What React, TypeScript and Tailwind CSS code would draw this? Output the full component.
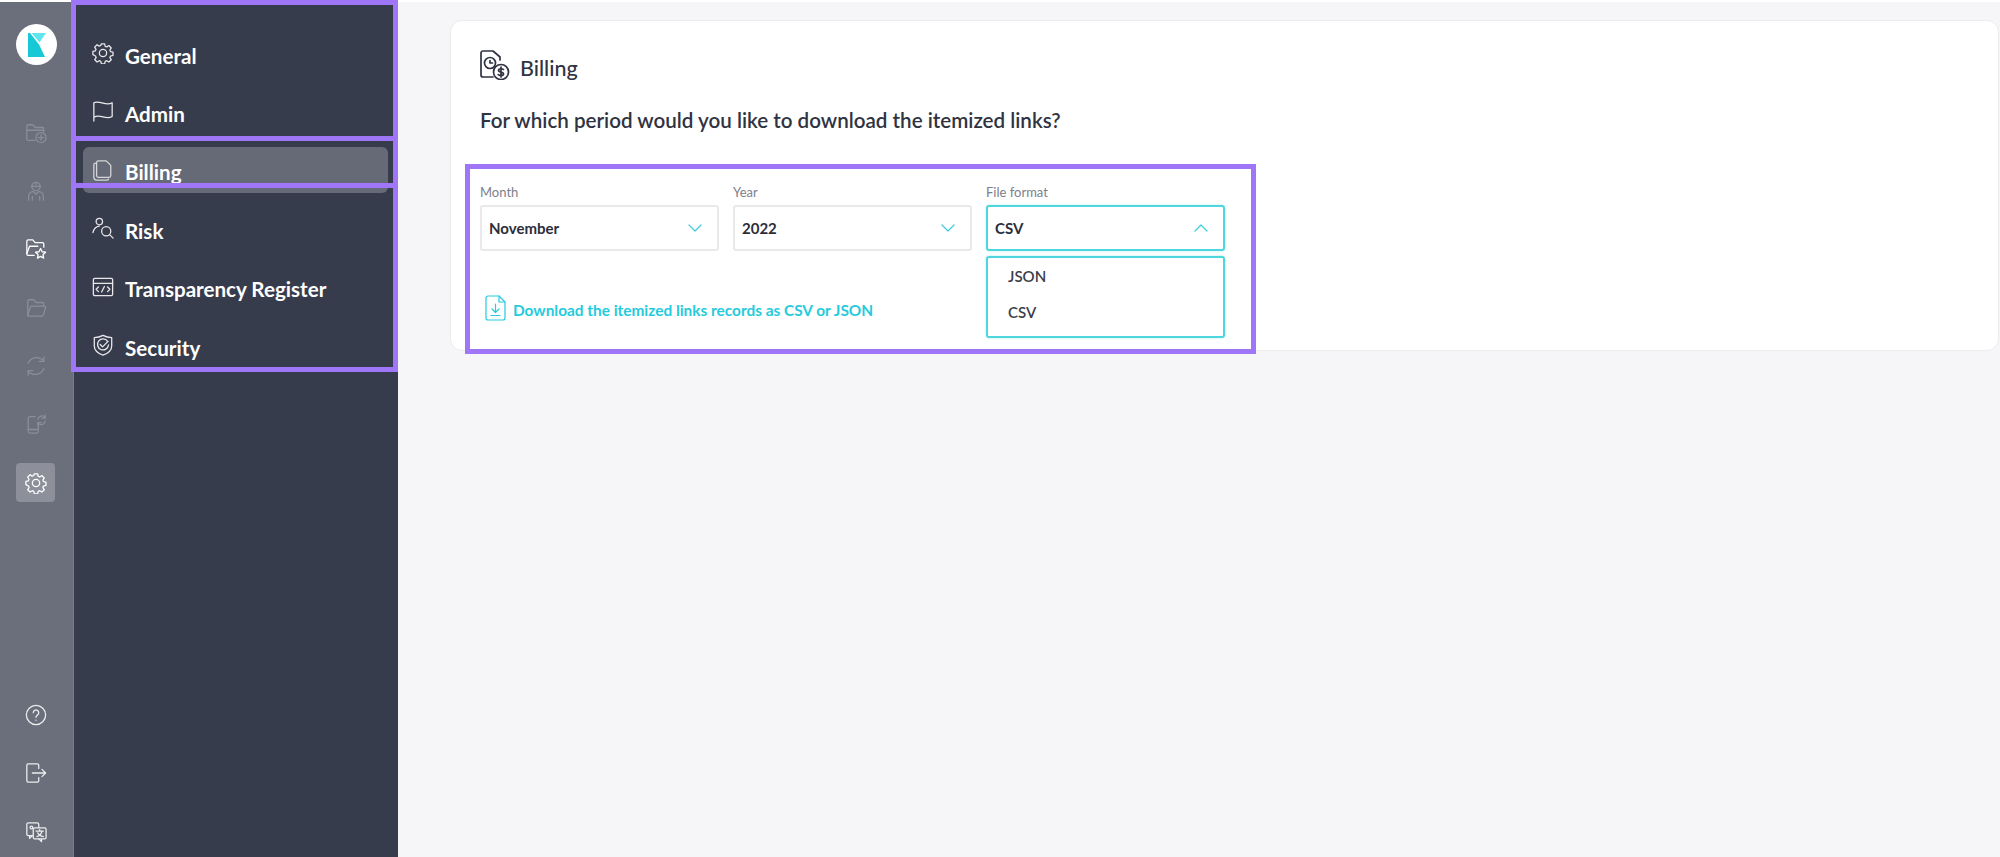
import type { ReactNode } from "react";

const font = "font-['Lato','Liberation_Sans',sans-serif]";

function Ico({ children, size = 22, view = 24, sw = 1.4 }: { children: ReactNode; size?: number; view?: number; sw?: number }) {
  return (
    <svg width={size} height={size} viewBox={`0 0 ${view} ${view}`} fill="none" stroke="currentColor" strokeWidth={sw} strokeLinecap="round" strokeLinejoin="round">
      {children}
    </svg>
  );
}

const gearPath =
  "M10.2 2h3.6l.6 2.7 1.7.7 2.3-1.5 2.6 2.6-1.5 2.3.7 1.7 2.7.6v3.6l-2.7.6-.7 1.7 1.5 2.3-2.6 2.6-2.3-1.5-1.7.7-.6 2.7h-3.6l-.6-2.7-1.7-.7-2.3 1.5-2.6-2.6 1.5-2.3-.7-1.7L1 13.8v-3.6l2.7-.6.7-1.7-1.5-2.3 2.6-2.6 2.3 1.5 1.7-.7z";

const GearIcon = () => (
  <Ico>
    <path d={gearPath} />
    <circle cx="12" cy="12" r="4" />
  </Ico>
);

const railTop = [
  {
    dim: true,
    icon: (
      <Ico>
        <path d="M11 20H3.500A1.500 1.500 0 0 1 2 18.500V4.500A1.500 1.500 0 0 1 3.500 3h5l2.500 3h8A1.500 1.500 0 0 1 20.500 7.500V11" />
        <path d="M2 9h18" />
        <circle cx="17.500" cy="17" r="5.500" />
        <path d="M17.500 14v6M14.500 17h6" />
      </Ico>
    ),
  },
  {
    dim: true,
    icon: (
      <Ico>
        <circle cx="12" cy="7" r="4.500" />
        <path d="M7 7h10M12 2.500V5" />
        <path d="M4 22v-4c0-3 2.500-5 5-5.500l3 3 3-3c2.500.5 5 2.500 5 5.500v4" />
        <path d="M8 22v-4M16 22v-4" />
      </Ico>
    ),
  },
  {
    dim: false,
    icon: (
      <Ico>
        <path d="M10 19H3.500A1.500 1.500 0 0 1 2 17.500V3.500A1.500 1.500 0 0 1 3.500 2h5l2.500 3h8A1.500 1.500 0 0 1 20.500 6.500V10" />
        <path d="M2 17l3-8h9" />
        <path d="M17 11.500l1.700 3.500 3.800.5-2.800 2.600.7 3.800-3.400-1.800-3.400 1.800.7-3.800-2.800-2.600 3.800-.5z" />
      </Ico>
    ),
  },
  {
    dim: true,
    icon: (
      <Ico>
        <path d="M3 19V4.500A1.500 1.500 0 0 1 4.500 3h5l2.500 3h7A1.500 1.500 0 0 1 20.500 7.500V10" />
        <path d="M3 20.500l3-10A1.500 1.500 0 0 1 7.500 10h14a1 1 0 0 1 1 1.300l-2.500 8.500a1.500 1.500 0 0 1-1.500 1H3z" />
      </Ico>
    ),
  },
  {
    dim: true,
    icon: (
      <Ico>
        <path d="M20.500 6.500A10 10 0 0 0 3.500 9" />
        <path d="M3.500 17.500A10 10 0 0 0 20.500 15" />
        <path d="M20.500 2v5h-5M3.500 22v-5h5" />
      </Ico>
    ),
  },
  {
    dim: true,
    icon: (
      <Ico>
        <path d="M11 4H5.500A2 2 0 0 0 3.500 6v14A2 2 0 0 0 5.500 22h7a2 2 0 0 0 2-2v-6" />
        <path d="M3.500 18h11" />
        <path d="M14 7a4.500 4.500 0 0 1 8-2M22 9a4.500 4.500 0 0 1-8 2" />
        <path d="M22 2v3.500h-3.500M14 14v-3.500h3.500" />
      </Ico>
    ),
  },
];

const navItems = [
  { label: "General", icon: <GearIcon /> },
  {
    label: "Admin",
    icon: (
      <Ico>
        <path d="M2 23V3c3-1.500 6.500-.5 10 .5s7 1.500 10-.5v15c-3 2-6.500 1.500-10 .5S5 17 2 19" />
      </Ico>
    ),
  },
  {
    label: "Billing",
    active: true,
    icon: (
      <Ico>
        <path d="M7 2h8.500L20.500 7v11a2 2 0 0 1-2 2H7a2 2 0 0 1-2-2V4a2 2 0 0 1 2-2z" />
        <path d="M5 4.500H4A2 2 0 0 0 2 6.500V20a3 3 0 0 0 3 3h11a2 2 0 0 0 2-1" />
      </Ico>
    ),
  },
  {
    label: "Risk",
    icon: (
      <Ico>
        <circle cx="8" cy="5" r="3.500" />
        <path d="M1 17c1-4 3.500-6.500 7-7" />
        <circle cx="15.500" cy="15.500" r="5" />
        <path d="M19.500 19.500L23 23" />
      </Ico>
    ),
  },
  {
    label: "Transparency Register",
    icon: (
      <Ico>
        <rect x="1.500" y="2.500" width="21" height="19" rx="1.500" />
        <path d="M1.500 8h21" />
        <path d="M7 12l-2.500 2.500L7 17M17 12l2.500 2.500L17 17M13.500 11.500l-3 6" />
      </Ico>
    ),
  },
  {
    label: "Security",
    icon: (
      <Ico>
        <path d="M12 1.500c3 1.500 6 2.300 9.500 2.500v9c0 5-4 8-9.500 10C6.500 21 2.500 18 2.500 13V4C6 3.800 9 3 12 1.500z" />
        <path d="M17 8a6 6 0 1 0 1 4" />
        <path d="M9 11.500l2.500 2.500 6-6" />
      </Ico>
    ),
  },
];

function Chevron({ up }: { up?: boolean }) {
  return (
    <svg width="16" height="10" viewBox="0 0 16 10" fill="none" stroke="#3fcfdc" strokeWidth="1.300" strokeLinecap="round" strokeLinejoin="round">
      <path d={up ? "M2 8l6-6 6 6" : "M2 2l6 6 6-6"} />
    </svg>
  );
}

function Field({ label, value, open }: { label: string; value: string; open?: boolean }) {
  return (
    <div className="w-[239px]">
      <div className="pt-[1px] text-[13px] leading-[18px] text-[#7d808a]">{label}</div>
      <div
        className={
          open
            ? "mt-[4px] flex h-[46px] items-center justify-between rounded-[3px] border-2 border-[#4ed6de] pl-[7px] pr-[14px] shadow-[0_0_3px_#bdeef1]"
            : "mt-[4px] flex h-[46px] items-center justify-between rounded-[3px] border-2 border-[#e9e9eb] pl-[7px] pr-[14px]"
        }
      >
        <span className="text-[15px] font-bold text-[#2b2e3a]">{value}</span>
        <Chevron up={open} />
      </div>
    </div>
  );
}

export default function App() {
  return (
    <div className={`relative flex h-[857px] w-[2000px] flex-col overflow-hidden bg-white pt-[2px] ${font}`}>
      <div className="flex min-h-0 flex-1">
        <aside className="flex w-[74px] shrink-0 flex-col items-center border-r border-[#7a7d89] bg-[#6b6e7b] pb-[6px] pt-[22px]">
          <div className="flex h-[41px] w-[41px] items-center justify-center rounded-full bg-white">
            <svg width="18" height="24" viewBox="0 0 18 24">
              <path d="M0 0h2l9 11.500L17 24H0z" fill="#17c9d6" />
              <path d="M3.500 0H18l-6.500 9.500z" fill="#62e4ec" />
            </svg>
          </div>
          <div className="mt-[48px] flex flex-col items-center gap-[19.4px] pr-[2px]">
            {railTop.map((item, i) => (
              <div key={i} className={item.dim ? "flex h-[39px] w-[39px] items-center justify-center text-[#8b8e9a]" : "flex h-[39px] w-[39px] items-center justify-center text-white"}>
                {item.icon}
              </div>
            ))}
            <div className="flex h-[39px] w-[39px] items-center justify-center rounded-[4px] bg-[#8d909b] text-white">
              <GearIcon />
            </div>
          </div>
          <div className="mt-auto flex flex-col items-center gap-[19.4px] pr-[2px] text-[#eceded]">
            <div className="flex h-[39px] w-[39px] items-center justify-center">
              <Ico>
                <circle cx="12" cy="12" r="10.500" />
                <path d="M9 9.500a3 3 0 1 1 4.500 2.600c-1 .6-1.500 1.200-1.500 2.400" />
                <path d="M12 17.500v.2" />
              </Ico>
            </div>
            <div className="flex h-[39px] w-[39px] items-center justify-center">
              <Ico>
                <path d="M15 7V3.500A1.500 1.500 0 0 0 13.500 2h-10A1.500 1.500 0 0 0 2 3.500v17A1.500 1.500 0 0 0 3.500 22h10a1.500 1.500 0 0 0 1.500-1.500V17" />
                <path d="M8 12h14M18.500 8l4 4-4 4" />
              </Ico>
            </div>
            <div className="flex h-[39px] w-[39px] items-center justify-center">
              <Ico>
                <path d="M8 16H3.500A1.500 1.500 0 0 1 2 14.500v-11A1.500 1.500 0 0 1 3.500 2h10A1.500 1.500 0 0 1 15 3.500V7" />
                <path d="M5 16v3l3-3" />
                <rect x="9" y="7.500" width="14" height="12" rx="1.500" />
                <path d="M18 19.500v3l-3-3" />
                <path d="M12 11h8M16 9.500V11M18.500 11c-.5 3-2.500 5-5.500 6M14 13c1 2 3 3.500 6 4" />
                <circle cx="7" cy="7" r="1.500" />
              </Ico>
            </div>
          </div>
        </aside>

        <nav className="flex w-[324px] shrink-0 flex-col gap-[12.4px] bg-[#373c4d] pl-[9px] pr-[10px] pt-[28px]">
          {navItems.map((item) => (
            <div
              key={item.label}
              className={
                item.active
                  ? "flex h-[46px] items-center gap-[11px] rounded-[6px] bg-[#666a76] pl-[9px] text-white"
                  : "flex h-[46px] items-center gap-[11px] rounded-[6px] pl-[9px] text-white"
              }
            >
              <span className={item.active ? "text-[#d5d6da]" : "text-[#e8e8ea]"}>{item.icon}</span>
              <span className="mt-[6px] text-[20.6px] font-bold">{item.label}</span>
            </div>
          ))}
        </nav>

        <main className="min-w-0 flex-1 bg-[#f6f6f8] pl-[52px] pr-[1px] pt-[18px]">
          <section className="relative h-[331px] rounded-[12px] border border-[#ececef] bg-white pl-[29px] pt-[29px]">
            <div className="flex h-[30px] items-center gap-[10px]">
              <svg width="30" height="30" viewBox="0 0 30 30" fill="none" stroke="#2f3342" strokeWidth="1.700" strokeLinecap="round" strokeLinejoin="round">
                <path d="M13 27H3a2 2 0 0 1-2-2V3a2 2 0 0 1 2-2h10l7 6v3" />
                <circle cx="10" cy="13" r="5.500" />
                <path d="M10 10.500V13h2.500" />
                <circle cx="21" cy="22" r="7.500" />
                <path d="M23.500 19.500c-1-1-5-1.200-5 .8 0 2.700 5 1 5 3.700 0 2-4 2-5.300.700M21 17v10" />
              </svg>
              <h1 className="mt-[5px] text-[21.5px] font-medium leading-[24px] text-[#2f3342]">Billing</h1>
            </div>
            <p className="mt-[28px] text-[20.6px] font-semibold leading-[24px] text-[#2f3342]">For which period would you like to download the itemized links?</p>
            <div className="mt-[50px] flex gap-[14px]">
              <Field label="Month" value="November" />
              <Field label="Year" value="2022" />
              <Field label="File format" value="CSV" open />
            </div>
            <a className="ml-[5px] mt-[42px] flex items-center gap-[7px] text-[15.4px] font-bold text-[#25cbdc]">
              <svg width="21" height="26" viewBox="0 0 21 26" fill="none" stroke="#25cbdc" strokeWidth="1.200" strokeLinecap="round" strokeLinejoin="round">
                <path d="M14 1H3a2 2 0 0 0-2 2v20a2 2 0 0 0 2 2h15a2 2 0 0 0 2-2V7z" />
                <path d="M14 1v6h6" />
                <path d="M10.500 9v8M7 14l3.500 3.500L14 14M6 20.500h9" />
              </svg>
              <span className="pt-[6px]">Download the itemized links records as CSV or JSON</span>
            </a>
            <div className="absolute left-[535px] top-[235px] h-[82px] w-[239px] rounded-[3px] border-2 border-[#4ed6de] bg-white pl-[20px] text-[15px] font-semibold text-[#3a3d48] shadow-[0_0_3px_#bdeef1]">
              <div className="leading-[36px]">JSON</div>
              <div className="leading-[36px]">CSV</div>
            </div>
          </section>
        </main>
      </div>

      {/* purple callout boxes drawn over the screenshot */}
      <div className="absolute left-[71px] top-0 h-[141px] w-[327px] border-[5px] border-[#a076f9]" />
      <div className="absolute left-[71px] top-[136px] h-[52px] w-[327px] border-[5px] border-[#a076f9]" />
      <div className="absolute left-[71px] top-[183px] h-[189px] w-[327px] border-[5px] border-[#a076f9]" />
      <div className="absolute left-[465px] top-[164px] h-[190px] w-[791px] border-[5px] border-[#a076f9]" />
    </div>
  );
}
